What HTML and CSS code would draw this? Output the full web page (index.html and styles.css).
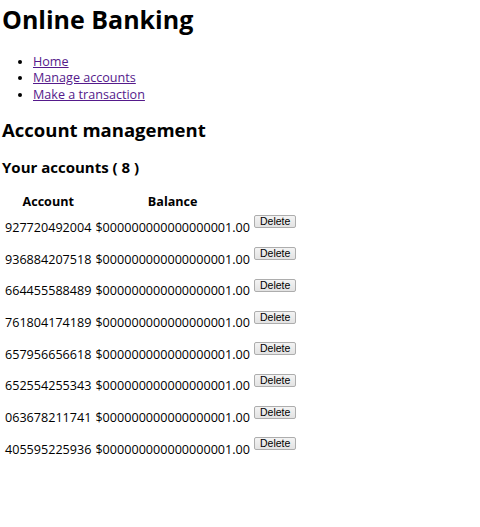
FILE: index.html
```html
<!DOCTYPE html>
<html>
<head>
<meta charset="utf-8">
<link rel="stylesheet" href="styles.css">
</head>
<body>
<h1 class="title">Online Banking</h1>
<ul class="nav">
  <li><a href="#">Home</a></li>
  <li><a href="#">Manage accounts</a></li>
  <li><a href="#">Make a transaction</a></li>
</ul>
<h2 class="section">Account management</h2>
<h3 class="sub">Your accounts ( 8 )</h3>
<table class="accounts">
  <thead>
    <tr><th>Account</th><th>Balance</th><th></th></tr>
  </thead>
  <tbody>
    <tr><td>927720492004</td><td>$000000000000000001.00</td><td class="act"><button class="del">Delete</button></td></tr>
    <tr><td>936884207518</td><td>$000000000000000001.00</td><td class="act"><button class="del">Delete</button></td></tr>
    <tr><td>664455588489</td><td>$000000000000000001.00</td><td class="act"><button class="del">Delete</button></td></tr>
    <tr><td>761804174189</td><td>$000000000000000001.00</td><td class="act"><button class="del">Delete</button></td></tr>
    <tr><td>657956656618</td><td>$000000000000000001.00</td><td class="act"><button class="del">Delete</button></td></tr>
    <tr><td>652554255343</td><td>$000000000000000001.00</td><td class="act"><button class="del">Delete</button></td></tr>
    <tr><td>063678211741</td><td>$000000000000000001.00</td><td class="act"><button class="del">Delete</button></td></tr>
    <tr><td>405595225936</td><td>$000000000000000001.00</td><td class="act"><button class="del">Delete</button></td></tr>
  </tbody>
</table>
</body>
</html>
```
FILE: styles.css
```css
html, body {
  background: #ffffff;
}
body {
  margin: 0;
  padding: 0 2px;
  font-family: "Open Sans", "Noto Sans", sans-serif;
  font-size: 12.6px;
  line-height: 17px;
  color: #000;
}
.title {
  font-size: 25px;
  line-height: 30px;
  font-weight: 700;
  margin: 4px 0 0 0;
}
.nav {
  margin: 19.5px 0 0 0;
  padding-left: 31px;
}
.nav li {
  line-height: 16.6px;
}
.nav a {
  color: #551a8b;
}
.section {
  font-size: 18.5px;
  line-height: 24px;
  font-weight: 700;
  margin: 14.5px 0 0 0;
}
.sub {
  font-size: 15px;
  line-height: 20px;
  font-weight: 700;
  margin: 15px 0 0 0;
}
.accounts {
  margin-top: 13.2px;
  border-spacing: 2px;
  border-collapse: separate;
}
.accounts th {
  padding: 1px;
  font-weight: 700;
  text-align: center;
  line-height: 17px;
}
.accounts td {
  padding: 6px 1px 1px 1px;
  vertical-align: top;
  white-space: nowrap;
}
.accounts td.act {
  padding: 1px;
}
.del {
  display: block;
  margin: 1.5px 0 13.2px 0;
  height: 13px;
  padding: 0 5px;
  font-family: "Liberation Sans", Arial, sans-serif;
  font-size: 10.5px;
  line-height: 11px;
  color: #000;
  background: linear-gradient(#f3f3f3, #e3e3e3);
  border: 1px solid #adadad;
  border-radius: 2px;
}
```
